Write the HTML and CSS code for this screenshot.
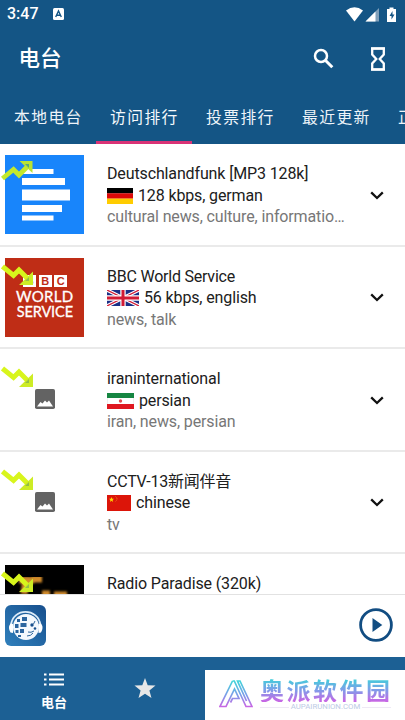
FILE: index.html
```html
<!DOCTYPE html>
<html lang="zh-CN">
<head>
<meta charset="utf-8">
<title>电台</title>
<link rel="stylesheet" href="styles.css">
</head>
<body>
<svg class="defs" width="0" height="0">
  <defs>
    <symbol id="chevron" viewBox="0 0 14 9"><path d="M1.2 1.4 7 7 12.8 1.4" fill="none" stroke="#111" stroke-width="2.3"/></symbol>
    <symbol id="down" viewBox="0 0 32 22"><path d="M1.5 2.500 12.500 11.500 18 6 27 15" fill="none" stroke="#d8f51c" stroke-width="5"/><path d="M32 7.500V21H18z" fill="#cdec25"/><path d="M28 13v4h-4z" fill="#92bd46"/></symbol>
    <symbol id="picture" viewBox="0 0 20 20"><rect width="20" height="20" rx="1.800" fill="#636363"/><path d="M2 17.500 5.500 13 7.500 14.500 10 11.500 12 13.500 14 11.500 18 17.500z" fill="#fff"/></symbol>
  </defs>
</svg>
<div class="screen">
  <header class="header">
    <div class="status">
      <span class="clock">3:47</span>
      <svg class="badge-a" viewBox="0 0 11 12"><rect width="11" height="12" rx="1.500" fill="#fff"/><path d="M2.700 9 5.500 3 8.300 9M3.800 7.200h3.400" fill="none" stroke="#145585" stroke-width="1.400"/></svg>
      <svg class="signals" viewBox="0 0 54 17">
        <path d="M1 4.500Q9.500-2 18 4.500L9.500 15.500z" fill="#fff"/>
        <path d="M34 2v13.500H20.500z" fill="#7f9fba"/><path d="M30.500 5.500v10h-10z" fill="#fff"/>
        <path d="M44.500 1.500h4v1.500h2.500v13H42V3h2.500z" fill="#fff"/><path d="m47.500 5-3 5h2v3.500l3-5h-2z" fill="#145585"/>
      </svg>
    </div>
    <div class="toolbar">
      <h1>电台</h1>
      <svg class="search" viewBox="0 0 21 21"><circle cx="8" cy="8" r="6" fill="none" stroke="#fff" stroke-width="2.500"/><path d="m12.300 12.300 7 7" stroke="#fff" stroke-width="3"/></svg>
      <svg class="hourglass" viewBox="0 0 16 24"><path d="M2.200 1.500h11.600v6L9.700 12l4.100 4.500v6H2.200v-6L6.300 12 2.200 7.500z" fill="none" stroke="#fff" stroke-width="2.300"/><path d="M1 1.500h14M1 22.500h14" stroke="#fff" stroke-width="2"/></svg>
    </div>
    <nav class="tabs">
      <span>本地电台</span><span class="active">访问排行</span><span>投票排行</span><span>最近更新</span><span>正在播放</span>
    </nav>
  </header>

  <main class="list">
    <article class="row">
      <div class="art">
        <svg class="logo" viewBox="0 0 79 79"><rect width="79" height="79" fill="#1885fb"/><path d="M17 14h31.500v5H17zM17 23h43v7H17zM17 34.500h48v11H17zM17 50h40v7H17zM17 60.500h31.500v5H17z" fill="#fff"/></svg>
        <svg class="trend up" viewBox="0 0 32 22"><path d="M1.500 18.500 12.500 9.500 18 15 27 6" fill="none" stroke="#c4e92c" stroke-width="4.800"/><path d="M18.500 1h13v12z" fill="#b9e332"/><path d="M24 4h4v4z" fill="#55a87b"/></svg>
      </div>
      <div class="info">
        <div class="name">Deutschlandfunk [MP3 128k]</div>
        <div class="meta"><svg class="flag" width="26" height="16" viewBox="0 0 26 16"><path d="M0 0h26v5.400H0z"/><path d="M0 5.300h26v5.400H0z" fill="#dc0808"/><path d="M0 10.600h26V16H0z" fill="#fc0"/></svg><span>128 kbps, german</span></div>
        <div class="tags">cultural news, culture, informatio…</div>
      </div>
      <svg class="chevron"><use href="#chevron"/></svg>
    </article>
    <article class="row">
      <div class="art">
        <div class="logo bbc"><div class="blocks"><b>B</b><b>B</b><b>C</b></div><span class="world">WORLD</span><span class="service">SERVICE</span></div>
        <svg class="trend"><use href="#down"/></svg>
      </div>
      <div class="info">
        <div class="name tight">BBC World Service</div>
        <div class="meta"><svg class="flag" width="32" height="16" viewBox="0 0 32 16"><path d="M0 0h32v16H0z" fill="#1a2f86"/><path d="m0 0 32 16M32 0 0 16" stroke="#fff" stroke-width="3.400"/><path d="m0 0 32 16M32 0 0 16" stroke="#d11b35" stroke-width="1.200"/><path d="M16 0v16M0 8h32" stroke="#fff" stroke-width="5.400"/><path d="M16 0v16M0 8h32" stroke="#d11b35" stroke-width="3"/></svg><span>56 kbps, english</span></div>
        <div class="tags">news, talk</div>
      </div>
      <svg class="chevron"><use href="#chevron"/></svg>
    </article>
    <article class="row">
      <div class="art">
        <svg class="placeholder"><use href="#picture"/></svg>
        <svg class="trend"><use href="#down"/></svg>
      </div>
      <div class="info">
        <div class="name">iraninternational</div>
        <div class="meta"><svg class="flag" width="27" height="16" viewBox="0 0 27 16"><path d="M0 0h27v16H0z" fill="#fff"/><path d="M0 0h27v5H0z" fill="#168642"/><path d="M0 11h27v5H0z" fill="#df1720"/><path d="M0 5v6M27 5v6" stroke="#ddd"/><circle cx="13.500" cy="8" r="1.700" fill="#e04b50"/></svg><span>persian</span></div>
        <div class="tags">iran, news, persian</div>
      </div>
      <svg class="chevron"><use href="#chevron"/></svg>
    </article>
    <article class="row">
      <div class="art">
        <svg class="placeholder"><use href="#picture"/></svg>
        <svg class="trend"><use href="#down"/></svg>
      </div>
      <div class="info">
        <div class="name tight">CCTV-13新闻伴音</div>
        <div class="meta"><svg class="flag" width="24" height="16" viewBox="0 0 24 16"><path d="M0 0h24v16H0z" fill="#dc1509"/><path d="m4.500 2 .7 1.700H7L5.600 4.900 6.100 7 4.500 5.700 2.900 7l.5-2.100L2 3.700h1.800z" fill="#ffde00"/><path d="M8.500 1.500q3 2.500 0 5" fill="none" stroke="#ee7b19" stroke-width=".9" stroke-dasharray="1.200 .6"/></svg><span>chinese</span></div>
        <div class="tags">tv</div>
      </div>
      <svg class="chevron"><use href="#chevron"/></svg>
    </article>
    <article class="row">
      <div class="art">
        <svg class="logo" viewBox="0 0 79 79"><defs><filter id="soft"><feGaussianBlur stdDeviation=".9"/></filter></defs><rect width="79" height="79"/><g filter="url(#soft)" fill="none" stroke="#d18b2b" stroke-width="7"><path d="M14 15h7l-2 14M22 18l7-4h8M37 29h8M49 30h13" /></g></svg>
        <svg class="trend"><use href="#down"/></svg>
      </div>
      <div class="info"><div class="name">Radio Paradise (320k)</div></div>
    </article>
  </main>

  <section class="player">
    <svg class="app" viewBox="0 0 41 41">
      <defs><linearGradient id="appbg" x1="1" y1="0" x2="0" y2="1"><stop stop-color="#174f8d"/><stop offset="1" stop-color="#3080bc"/></linearGradient></defs>
      <rect width="41" height="41" rx="6" fill="url(#appbg)"/>
      <path d="M6 20C8 2.500 33 2.500 35.500 20" fill="none" stroke="#dcebf8" stroke-width="1.800"/>
      <circle cx="21" cy="22" r="13" fill="#f3f8fd"/>
      <path d="M5.500 18.500q-3 4 0 9l2.500.5V19zM36 18.500q3 4 0 9l-2.500.5V19z" fill="#fff"/>
      <path d="M12 14h3v3h-3zM17 12h5v4h-5zM10 19h3.500v4H10zM15.500 18h6v4h-6zM10.500 25h3v3h-3zM15 24h4v4h-4zM13 30h3v2h-3z" fill="#2b659f"/>
      <circle cx="27" cy="20" r="1.700" fill="#174f8d"/><circle cx="30" cy="23.500" r="1.300" fill="#174f8d"/><path d="m28.500 19 1.500-3M23 27q3 1 6-1M22 31q4 0 6-3" stroke="#2c659c" fill="none"/>
    </svg>
    <svg class="play" viewBox="0 0 34 34"><circle cx="17" cy="17" r="15.400" fill="none" stroke="#124d82" stroke-width="2.800"/><path d="m13.500 10 9.800 7-9.800 7z" fill="#124d82"/></svg>
  </section>

  <footer class="bottom">
    <div class="nav-item">
      <svg class="menu" viewBox="0 0 20 13"><path d="M0 1.500h2.500M0 6.500h2.500M0 11.500h2.500M5 1.500h15M5 6.500h15M5 11.500h15" stroke="#fff" stroke-width="2.200"/></svg>
      <span>电台</span>
    </div>
    <svg class="star" viewBox="0 0 22 21"><path d="m11 0 2.700 7.200 7.800.4-6.100 4.900 2.100 7.600L11 15.800l-6.500 4.300 2.100-7.600L.5 7.600l7.800-.4z" fill="#e7e7e7"/></svg>
    <div class="mark">
      <svg class="mark-logo" viewBox="0 0 34 28"><defs><linearGradient id="markink" x1="0" y1="0" x2="0" y2="1"><stop stop-color="#42d5d9"/><stop offset=".55" stop-color="#7c9de9"/><stop offset="1" stop-color="#c766e4"/></linearGradient></defs><path d="M13.500 1 1 26.500h6L15.500 9l4.500 9.500h-6.500l-2 4M13.500 1h1.800L27 26.500h6L21 1h-2.500l9 20" fill="none" stroke="url(#markink)" stroke-width="1.700"/></svg>
      <div class="mark-text"><strong>奥派软件园</strong><div class="site"><i></i><span>AUPAIRUNION.COM</span><i></i></div></div>
    </div>
  </footer>
</div>
</body>
</html>
```

FILE: styles.css
```css
* { box-sizing: border-box; }
body { margin: 0; font-family: Roboto, "Noto Sans CJK SC", sans-serif; color: #202020; }
.defs { position: absolute; }
svg { display: block; flex: none; }
.screen { width: 405px; height: 720px; display: flex; flex-direction: column; overflow: hidden; background: #fff; }
.header { height: 144px; flex: none; background: #145585; color: #fff; }
.status { height: 28px; display: flex; align-items: center; padding: 0 7px; }
.clock { width: 46px; font-size: 16px; font-weight: 500; line-height: 28px; }
.badge-a { width: 11px; height: 12px; }
.signals { width: 54px; height: 17px; margin-left: auto; margin-right: -1px; }
.toolbar { height: 62px; display: flex; align-items: center; padding: 0 19px 0 18.500px; }
h1 { margin: 0; flex: 1; font-size: 21.5px; font-weight: 500; line-height: 60px; }
.search { width: 21px; height: 21px; margin: -2px 36px 0 0; }
.hourglass { width: 16px; height: 24px; }
.tabs { height: 54px; display: flex; overflow: hidden; font-size: 15.8px; letter-spacing: 1.400px; line-height: 55px; }
.tabs span { width: 96px; flex: none; height: 54px; padding-left: 14px; white-space: nowrap; color: #eef4f9; }
.tabs .active { border-bottom: 3px solid #d93376; color: #f5f9fc; }
.list { height: 450px; flex: none; overflow: hidden; }
.row { height: 102.5px; display: flex; padding: 11.3px 21px 0 5.3px; border-bottom: 2px solid #eaeaea; }
.art { width: 101.700px; height: 79px; flex: none; position: relative; }
.logo { width: 79px; height: 79px; }
.trend { width: 32px; height: 22px; position: absolute; left: -4px; top: 6px; }
.trend.up { top: 5px; }
.placeholder { width: 20px; height: 20px; margin: 29px 0 0 29.500px; }
.bbc { background: #bf2d16; color: #fff; display: flex; flex-direction: column; align-items: center; padding-top: 17px; font-family: Lato, sans-serif; }
.blocks { display: flex; gap: 2.500px; height: 12px; margin-left: 1px; }
.blocks b { width: 13px; height: 12px; background: #fff; color: #bf2d16; font: 700 11px/12px "Liberation Sans", sans-serif; text-align: center; }
.world, .service { font-size: 15px; line-height: 15px; height: 15px; -webkit-text-stroke: .3px #fff; }
.world { margin-top: 2px; letter-spacing: .3px; }
.service { font-size: 14.5px; letter-spacing: -.1px; }
.info { flex: 1; padding-top: 8.200px; font-size: 16px; line-height: 21.500px; letter-spacing: -.13px; white-space: nowrap; }
.tight { letter-spacing: -.22px; }
.meta { display: flex; align-items: center; gap: 5px; height: 21.500px; }
.tags { color: #777; }
.chevron { width: 14px; height: 9px; margin-top: 35.500px; }
.player { height: 63px; flex: none; display: flex; justify-content: space-between; padding: 9.500px 12px 0 4.500px; border-top: 1.500px solid #e2e2e2; }
.app { width: 41px; height: 41px; }
.play { width: 34px; height: 34px; margin-top: 3px; }
.bottom { height: 63px; flex: none; display: flex; background: #1c6094; }
.nav-item { width: 108px; padding-top: 16px; display: flex; flex-direction: column; align-items: center; color: #fff; font-size: 13px; font-weight: 700; line-height: 18px; }
.menu { width: 20px; height: 13px; margin-bottom: 8px; }
.star { width: 22px; height: 21px; margin: 21px 0 0 26px; }
.mark { width: 200px; height: 50px; margin: 13px 0 0 49px; flex: none; display: flex; background: #fff; padding: 8px 0 0 14px; }
.mark-logo { width: 34px; height: 28px; margin: 2px 7px 0 0; }
.mark-text { width: 131px; }
.mark strong { display: block; font: 700 24px/24px "Noto Sans CJK SC", sans-serif; letter-spacing: 2.500px; height: 24px; white-space: nowrap; color: transparent; background: linear-gradient(#3bd4d8, #7f9de9 50%, #cb63e4); -webkit-background-clip: text; background-clip: text; }
.site { display: flex; align-items: center; justify-content: center; gap: 2px; color: #bccbe5; font-size: 7.800px; line-height: 10px; white-space: nowrap; }
.site i { height: 1px; flex: 1; background: #eee9f5; }
```
